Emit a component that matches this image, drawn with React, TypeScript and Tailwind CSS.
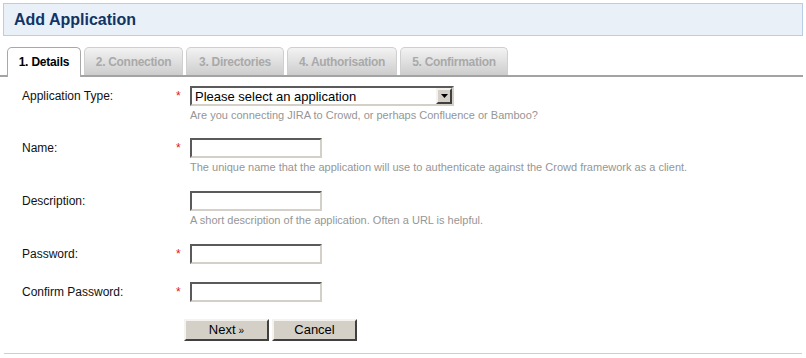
import React from "react";

const tabs = [
  { label: "1. Details", width: "w-[74px]" },
  { label: "2. Connection", width: "w-[99px]" },
  { label: "3. Directories", width: "w-[98px]" },
  { label: "4. Authorisation", width: "w-[110px]" },
  { label: "5. Confirmation", width: "w-[108px]" }
];

function Field({
  label,
  required = false,
  help,
  children
}: {
  label: string;
  required?: boolean;
  help?: string;
  children: React.ReactNode;
}) {
  return (
    <div className="flex">
      <div className="flex h-[20px] w-[154px] items-center text-[12px] text-[#111]">{label}</div>
      <div className="h-[20px] w-[14px] text-[12px] leading-[20px] text-[#e4151b]">
        {required ? "*" : ""}
      </div>
      <div>
        {children}
        {help ? (
          <p className="mt-[3px] text-[11px] leading-[13px] text-[#969696]">{help}</p>
        ) : null}
      </div>
    </div>
  );
}

function TextInput() {
  return (
    <div className="h-[20px] w-[132px] border-2 border-t-[#5a5a5a] border-l-[#5a5a5a] border-b-[#d4d0c8] border-r-[#d4d0c8] bg-white" />
  );
}

function WinButton({ children, width }: { children: React.ReactNode; width: string }) {
  return (
    <div
      className={`flex h-[22px] ${width} items-center justify-center border-2 border-t-[#f4f3ef] border-l-[#f4f3ef] border-b-[#404040] border-r-[#404040] bg-[#d4d0c8] text-[13px] text-black`}
    >
      {children}
    </div>
  );
}

export default function App() {
  return (
    <div className="h-[358px] w-[806px] overflow-hidden bg-white font-['Liberation_Sans',Arial,sans-serif]">
      <div className="mx-[3px] mt-[3px] flex h-[33px] items-center border border-[#b9cee6] bg-[#eaf0f8] pl-[10px]">
        <h1 className="text-[16px] font-bold text-[#113466]">Add Application</h1>
      </div>

      <div className="mr-[3px] mt-[11px] flex items-end gap-[3px] border-b-2 border-[#a3a3a3] pl-[7px]">
        {tabs.map((tab, i) =>
          i === 0 ? (
            <div
              key={tab.label}
              className={`-mb-[2px] flex h-[30px] ${tab.width} items-center justify-center whitespace-nowrap rounded-t-[5px] border border-b-0 border-[#a8a8a8] bg-white pb-[1px] text-[12px] font-bold tracking-[-0.2px] text-black`}
            >
              {tab.label}
            </div>
          ) : (
            <div
              key={tab.label}
              className={`flex h-[28px] ${tab.width} items-center justify-center whitespace-nowrap rounded-t-[5px] border border-b-0 border-[#cfcfcf] bg-gradient-to-b from-[#f3f3f3] to-[#cdcdcd] pt-[1px] text-[12px] font-bold tracking-[-0.3px] text-[#a9a9a9]`}
            >
              {tab.label}
            </div>
          )
        )}
      </div>

      <div className="mt-[9px] flex flex-col gap-[17px] pl-[22px]">
        <Field
          label="Application Type:"
          required
          help="Are you connecting JIRA to Crowd, or perhaps Confluence or Bamboo?"
        >
          <div className="flex h-[20px] w-[264px] items-center border-2 border-t-[#5a5a5a] border-l-[#5a5a5a] border-b-[#d4d0c8] border-r-[#d4d0c8] bg-white">
            <span className="flex-1 pl-[3px] text-[13px] leading-none text-black">
              Please select an application
            </span>
            <span className="flex h-[16px] w-[16px] items-center justify-center border-2 border-t-[#f4f3ef] border-l-[#f4f3ef] border-b-[#404040] border-r-[#404040] bg-[#d4d0c8]">
              <svg width="7" height="4" viewBox="0 0 7 4">
                <path d="M0 0h7L3.5 4z" fill="#000" />
              </svg>
            </span>
          </div>
        </Field>

        <div className="-mt-[1px]">
          <Field
            label="Name:"
            required
            help="The unique name that the application will use to authenticate against the Crowd framework as a client."
          >
            <TextInput />
          </Field>
        </div>

        <Field label="Description:" help="A short description of the application. Often a URL is helpful.">
          <TextInput />
        </Field>

        <Field label="Password:" required>
          <TextInput />
        </Field>

        <div className="mt-[1px]">
          <Field label="Confirm Password:" required>
            <TextInput />
          </Field>
        </div>

        <div className="flex gap-[3px] pl-[162px]">
          <WinButton width="w-[85px]">
            Next <span className="ml-[3px] text-[10px]">»</span>
          </WinButton>
          <WinButton width="w-[85px]">Cancel</WinButton>
        </div>
      </div>

      <div className="mx-[4px] mt-[12px] border-t border-[#c6cfdf]" />
    </div>
  );
}
